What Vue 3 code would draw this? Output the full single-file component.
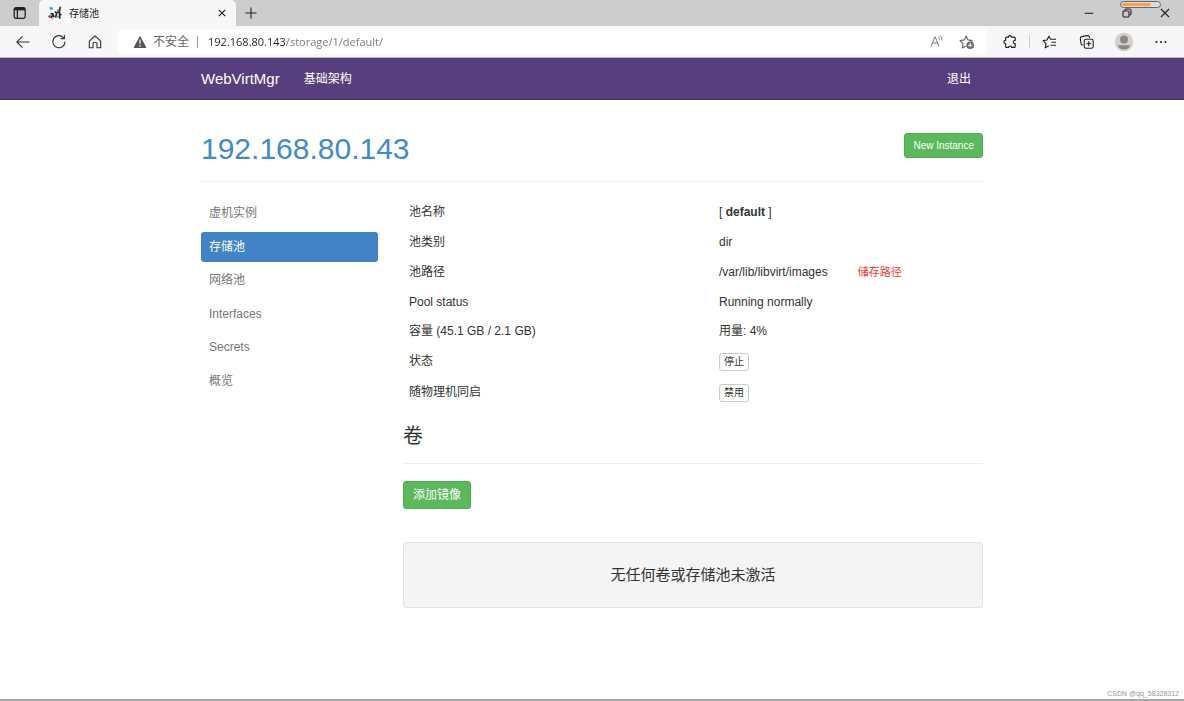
<script setup>
import { ref } from 'vue'

const address = ref('192.168.80.143/storage/1/default/')
const active = ref('存储池')
const menu = ['虚机实例', '存储池', '网络池', 'Interfaces', 'Secrets', '概览']
</script>

<template>
  <div class="window">
    <header class="tabstrip">
      <button class="tab-actions" aria-label="Tab actions">
        <svg width="14" height="14" viewBox="0 0 14 14" fill="none" stroke="#222" stroke-width="1.3">
          <rect x="1.2" y="1.7" width="11" height="10.6" rx="1.8" />
          <path d="M1.5 3.2h10.6" stroke-width="2.4" />
          <path d="M4.4 4v8" />
        </svg>
      </button>
      <div class="tab">
        <svg width="14" height="14" viewBox="0 0 14 14" fill="none">
          <path d="M1.6.8l3.4 1-.8 2.2-2.4-.8z" fill="#1da0dc" />
          <path d="M2.4 7.6l2.4.2 1.2 3.4M5 8.4l-2 3.6M12.4.8l-1 4.6.4 7.4M11.4 5.6L8.6 7l-1 4.6M8.8 7l-2-1.4M11.6 7.6l1.6 1.6" stroke="#2e2e2e" stroke-width="1.7" />
          <circle cx="1.6" cy="10.6" r="1.3" fill="#c2188b" />
          <circle cx="4.4" cy="12.8" r="1" fill="#e3c520" />
          <circle cx="9.8" cy="10.6" r="1.1" fill="#52a352" />
          <circle cx="9.8" cy="4.2" r="1" fill="#8a7a4a" />
        </svg>
        <span class="tab-title">存储池</span>
        <button class="tab-close" aria-label="Close tab">
          <svg width="8" height="8" viewBox="0 0 8 8" stroke="#222" stroke-width="1.2"><path d="M.8.8l6.4 6.4M7.2.8L.8 7.2" /></svg>
        </button>
      </div>
      <button class="new-tab" aria-label="New tab">
        <svg width="12" height="12" viewBox="0 0 12 12" stroke="#222" stroke-width="1.1"><path d="M6 .5v11M.5 6h11" /></svg>
      </button>
      <div class="window-buttons">
        <button aria-label="Minimize">
          <svg width="10" height="10" viewBox="0 0 10 10" stroke="#222" stroke-width="1.1"><path d="M.8 5.3h8.4" /></svg>
        </button>
        <button class="restore" aria-label="Restore">
          <svg width="10" height="10" viewBox="0 0 10 10" fill="none" stroke="#222" stroke-width="1.1">
            <rect x="1" y="3" width="6" height="6" rx="1" />
            <path d="M3 2.8V2.2Q3 1 4.2 1h3.2Q9 1 9 2.6v3.2Q9 7 7.8 7h-.6" />
          </svg>
          <span class="meter"><span class="meter-fill"></span></span>
        </button>
        <button aria-label="Close">
          <svg width="10" height="10" viewBox="0 0 10 10" stroke="#222" stroke-width="1.1"><path d="M1 1l8 8M9 1L1 9" /></svg>
        </button>
      </div>
    </header>

    <div class="toolbar">
      <button aria-label="Back">
        <svg width="16" height="16" viewBox="0 0 16 16" fill="none" stroke="#333" stroke-width="1.1"><path d="M14.5 8H1.8M7.4 2.4L1.8 8l5.6 5.6" /></svg>
      </button>
      <button aria-label="Refresh">
        <svg width="16" height="16" viewBox="0 0 16 16" fill="none" stroke="#333" stroke-width="1.1"><path d="M12.6 3.8A6.1 6.1 0 1 0 14 7.5M13.4 1v3.6H9.7" /></svg>
      </button>
      <button aria-label="Home">
        <svg width="16" height="16" viewBox="0 0 16 16" fill="none" stroke="#333" stroke-width="1.1" stroke-linejoin="round"><path d="M2.3 7.1L8 1.9l5.7 5.2v6.6H10V9.6Q10 8.2 8 8.2T6 9.6v4.1H2.3z" /></svg>
      </button>
      <div class="address">
        <svg width="14" height="14" viewBox="0 0 14 14"><path d="M7 .8l6.2 11.4q.2.8-.6.8H1.4q-.8 0-.6-.8z" fill="#555" /><path d="M7 4.5v4.2M7 10v1.4" stroke="#fff" stroke-width="1.2" /></svg>
        <label for="url" class="insecure">不安全</label>
        <span class="address-sep"></span>
        <input id="url" v-model="address" type="text" spellcheck="false" />
        <button aria-label="Read aloud">
          <svg width="16" height="16" viewBox="0 0 16 16" fill="none" stroke="#777" stroke-width="1"><path d="M2 12.5L5.7 3h.6L10 12.5M3.4 9h5.2M9.4 3.2q1.2 1 .9 2.6M11 1.6q2.4 2 1.8 4.8" /></svg>
        </button>
        <button aria-label="Add to favorites">
          <svg width="16" height="16" viewBox="0 0 16 16" fill="none" stroke="#666" stroke-width="1.1" stroke-linejoin="round"><path d="M6.8 12.1l-3.5 1.8.7-4.3L1 6.6l4.2-.7 1.9-3.8L9 5.9l4.2.7-.8 1" /><circle cx="11.2" cy="11.2" r="3.8" fill="#666" stroke="none" /><path d="M11.2 9.1v4.2M9.1 11.2h4.2" stroke="#fff" /></svg>
        </button>
      </div>
      <button aria-label="Extensions">
        <svg width="16" height="16" viewBox="0 0 16 16" fill="none" stroke="#222" stroke-width="1.2" stroke-linejoin="round"><path d="M4.6 3.2h1.9c-.4-2.2 3.2-2.2 2.8 0h2.9q1 0 1 1v2.2c-2.5-.2-2.5 3.4 0 3.2v2.8q0 1-1 1H9.5c.3-1.9-3.1-1.9-2.8 0H4.6q-1 0-1-1V9.7c-2.3.1-2.3-3.4 0-3.3V4.2q0-1 1-1z" /></svg>
      </button>
      <span class="toolbar-sep"></span>
      <button aria-label="Favorites">
        <svg width="16" height="16" viewBox="0 0 16 16" fill="none" stroke="#222" stroke-width="1.1" stroke-linejoin="round"><path d="M6.8 11.7L3.2 13.8l.8-4.2L1 6.6l4-.6 1.9-3.8L8.6 5.2H14M9.5 8.2H14M8.5 11.2H14" /></svg>
      </button>
      <button aria-label="Collections">
        <svg width="16" height="16" viewBox="0 0 16 16" fill="none" stroke="#222" stroke-width="1.1"><rect x="5.2" y="5.2" width="9" height="9" rx="1.8" /><path d="M9.7 7.2v5M7.2 9.7h5M3.8 11.2Q2.3 10.8 2 9.3L1.3 4.6Q1.1 3 2.7 2.6l5.6-1q1.7-.2 2.2 1.4l.2 1" /></svg>
      </button>
      <button aria-label="Profile">
        <svg width="20" height="20" viewBox="0 0 20 20"><circle cx="10" cy="10" r="9.2" fill="#d3d0ce" /><circle cx="10" cy="7.6" r="4" fill="#8b8784" /><path d="M3.9 13.2h12.2q-.5 3.8-6.1 4.4-5.6-.6-6.1-4.4z" fill="#8b8784" /></svg>
      </button>
      <button aria-label="Settings and more">
        <svg width="14" height="14" viewBox="0 0 14 14" fill="#222"><circle cx="2.5" cy="7" r="1.1" /><circle cx="7" cy="7" r="1.1" /><circle cx="11.5" cy="7" r="1.1" /></svg>
      </button>
    </div>

    <nav class="navbar">
      <div class="container navbar-inner">
        <a class="brand" href="#">WebVirtMgr</a>
        <a class="nav-link" href="#">基础架构</a>
        <a class="nav-link logout" href="#">退出</a>
      </div>
    </nav>

    <main class="container page">
      <div class="page-header">
        <h1><a href="#">192.168.80.143</a></h1>
        <button class="btn btn-success">New Instance</button>
      </div>

      <div class="columns">
        <nav class="pills">
          <a v-for="item in menu" :key="item" href="#" :class="{ active: item === active }" @click.prevent="active = item">{{ item }}</a>
        </nav>

        <section class="content">
          <table>
            <tbody>
              <tr><td>池名称</td><td>[ <strong>default</strong> ]</td></tr>
              <tr><td>池类别</td><td>dir</td></tr>
              <tr><td>池路径</td><td><span class="path">/var/lib/libvirt/images</span><span class="note">储存路径</span></td></tr>
              <tr><td>Pool status</td><td>Running normally</td></tr>
              <tr><td>容量 (45.1 GB / 2.1 GB)</td><td>用量: 4%</td></tr>
              <tr><td>状态</td><td><button class="btn btn-default">停止</button></td></tr>
              <tr><td>随物理机同启</td><td><button class="btn btn-default">禁用</button></td></tr>
            </tbody>
          </table>

          <h3>卷</h3>
          <button class="btn btn-success btn-large">添加镜像</button>
          <div class="well">无任何卷或存储池未激活</div>
        </section>
      </div>
    </main>

    <footer class="watermark">CSDN @qq_58328312</footer>
  </div>
</template>

<style>
body {
  margin: 0;
}
</style>

<style scoped>
.window {
  display: flex;
  flex-direction: column;
  min-height: 100vh;
  box-sizing: border-box;
  border-bottom: 2px solid #aaa6a8;
  background: #fff;
  color: #333;
  font: 12px/17px "Liberation Sans", "Noto Sans CJK SC", sans-serif;
}

button {
  padding: 0;
  border: 0;
  background: none;
  font-family: inherit;
  color: inherit;
}

a {
  text-decoration: none;
}

svg {
  display: block;
}

.tabstrip {
  display: flex;
  height: 26px;
  background: #cdcdcd;
}

.tab-actions {
  display: grid;
  place-items: center;
  width: 39px;
}

.tab {
  display: flex;
  align-items: center;
  box-sizing: border-box;
  width: 197px;
  padding: 0 9px;
  border-radius: 5px 5px 0 0;
  background: #f7f7f7;
}

.tab-title {
  flex: 1;
  margin-left: 7px;
  font-size: 10px;
  color: #222;
}

.tab-close {
  padding: 1px;
}

.new-tab {
  display: grid;
  place-items: center;
  width: 29px;
}

.window-buttons {
  display: flex;
  margin-left: auto;
}

.window-buttons button {
  position: relative;
  display: grid;
  place-items: center;
  width: 38px;
}

.meter {
  position: absolute;
  top: 1px;
  left: 12px;
  box-sizing: border-box;
  width: 41px;
  height: 7px;
  padding: 1px;
  border: 1px solid #666;
  border-radius: 4px;
  background: #ddd;
}

.meter-fill {
  display: block;
  width: 78%;
  height: 3px;
  border-radius: 2px;
  background: #f5a055;
}

.toolbar {
  display: flex;
  align-items: center;
  height: 31px;
  padding: 0 5px;
  border-bottom: 1px solid #bbb;
  background: #f7f7f7;
}

.toolbar > button {
  display: grid;
  place-items: center;
  width: 36px;
  height: 26px;
}

.toolbar > .address ~ button {
  width: 37px;
}

.toolbar-sep {
  width: 1px;
  height: 13px;
  margin: 0 1px;
  background: #ccc;
}

.address {
  display: flex;
  flex: 1;
  align-items: center;
  box-sizing: border-box;
  height: 25px;
  margin: 0 4px 0 5px;
  padding: 0 12px 0 15px;
  border-radius: 4px;
  background: #fff;
}

.insecure {
  margin-left: 6px;
  padding-top: 2px;
  color: #666;
}

.address-sep {
  width: 1px;
  height: 12px;
  margin: 0 10px 0 8px;
  background: #999;
}

.address input {
  flex: 1;
  min-width: 0;
  padding: 0;
  border: 0;
  outline: 0;
  background: linear-gradient(90deg, #222 77px, #777 77px);
  background-clip: text;
  color: transparent;
  font: 11px/17px "Open Sans", "Noto Sans", sans-serif;
}

.address button {
  margin-left: 14px;
}

.container {
  box-sizing: border-box;
  width: 100%;
  max-width: 782px;
  margin: 0 auto;
}

.navbar {
  border-bottom: 1px solid #3f2b63;
  background: #573e7c;
}

.navbar-inner {
  display: flex;
  align-items: center;
  height: 41px;
}

.brand {
  margin-right: 24px;
  font-size: 15px;
  color: #fff;
}

.nav-link {
  padding-top: 2px;
  color: #fff;
}

.logout {
  margin: 0 12px 0 auto;
}

.page {
  flex: 1;
  padding-top: 33px;
}

.page-header {
  display: flex;
  align-items: flex-start;
  justify-content: space-between;
  padding-bottom: 16px;
  border-bottom: 1px solid #eee;
}

h1 {
  margin: 0;
  font-size: 30px;
  font-weight: 400;
  line-height: 32px;
}

h1 a {
  color: #428bca;
}

.btn {
  border: 1px solid transparent;
  border-radius: 3px;
  cursor: pointer;
}

.btn-success {
  padding: 3px 8px;
  border-color: #4cae4c;
  background: #5cb85c;
  color: #fff;
  font-size: 10px;
  line-height: 17px;
}

.btn-large {
  padding: 5px 9px 4px;
  font-size: 12px;
}

.btn-default {
  display: block;
  padding: 0 4px;
  border-color: #ccc;
  background: #fff;
  font-size: 10px;
  line-height: 16px;
}

.columns {
  display: flex;
  align-items: flex-start;
  gap: 25px;
  padding-top: 16px;
}

.pills {
  display: flex;
  flex: 0 0 177px;
  flex-direction: column;
  justify-content: space-between;
  min-height: 198px;
}

.pills a {
  padding: 7px 8px 6px;
  border-radius: 3px;
  color: #777;
}

.pills .active {
  background: #4183c4;
  color: #fff;
}

.content {
  flex: 1;
  min-width: 0;
}

table {
  width: 100%;
  height: 211px;
  border-collapse: collapse;
  table-layout: fixed;
}

td {
  padding: 6px;
  vertical-align: top;
}

td:first-child {
  width: 298px;
}

.note {
  margin-left: 30px;
  font-size: 11px;
  color: #f33;
}

h3 {
  margin: 14px 0 17px;
  padding-bottom: 14px;
  border-bottom: 1px solid #eee;
  font-size: 20px;
  font-weight: 400;
  line-height: 26px;
}

.well {
  margin-top: 33px;
  padding: 21px 16px;
  border: 1px solid #e3e3e3;
  border-radius: 3px;
  background: #f4f4f4;
  font-size: 15px;
  line-height: 22px;
  text-align: center;
}

.watermark {
  padding: 0 5px 1px;
  font-size: 7px;
  line-height: 9px;
  color: #999;
  text-align: right;
}
</style>
